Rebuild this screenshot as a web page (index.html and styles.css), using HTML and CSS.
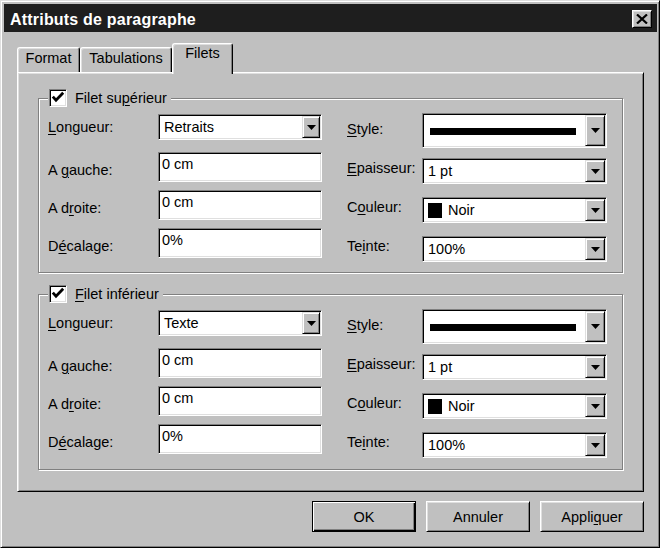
FILE: index.html
```html
<!DOCTYPE html>
<html lang="fr">
<head>
<meta charset="utf-8">
<title>Attributs de paragraphe</title>
<link rel="stylesheet" href="styles.css">
</head>
<body>
<div class="window">
  <div class="titlebar">
    <span class="title">Attributs de paragraphe</span>
    <span class="close"><svg width="12" height="10" viewBox="0 0 12 10"><path d="M1 0.5 L11 9.5 M11 0.5 L1 9.5" stroke="#000" stroke-width="2.2" fill="none"/></svg></span>
  </div>

  <div class="tabs">
    <div class="tab tab-format">Format</div>
    <div class="tab tab-tabul">Tabulations</div>
    <div class="tab tab-filets active">Filets</div>
  </div>

  <div class="panel">
    <div class="group">
      <div class="legend">
        <span class="check"><svg width="14" height="14" viewBox="0 0 14 14"><path d="M1.8 5.6 L5 9.2 L12.2 1.8" stroke="#000" stroke-width="2.8" fill="none"/></svg></span>
        <span>Filet su<u>p</u>érieur</span>
      </div>
      <div class="cols">
        <div class="col col-left">
          <div class="row row-l1"><span class="lbl"><u>L</u>ongueur:</span><div class="combo combo-left"><span class="val">Retraits</span><span class="drop"><svg width="9" height="5" viewBox="0 0 9 5"><path d="M0 0H9L4.5 5Z" fill="#000"/></svg></span></div></div>
          <div class="row row-field row-l2"><span class="lbl">A <u>g</u>auche:</span><div class="field">0 cm</div></div>
          <div class="row row-field row-l3"><span class="lbl">A d<u>r</u>oite:</span><div class="field">0 cm</div></div>
          <div class="row row-field row-l3"><span class="lbl">D<u>é</u>calage:</span><div class="field">0%</div></div>
        </div>
        <div class="col col-right">
          <div class="row row-r1"><span class="lbl lbl-style"><u>S</u>tyle:</span><div class="combo combo-right combo-style"><span class="val"><span class="bar"></span></span><span class="drop"><svg width="9" height="5" viewBox="0 0 9 5"><path d="M0 0H9L4.5 5Z" fill="#000"/></svg></span></div></div>
          <div class="row row-r2"><span class="lbl lbl-up"><u>E</u>paisseur:</span><div class="combo combo-right"><span class="val">1 pt</span><span class="drop"><svg width="9" height="5" viewBox="0 0 9 5"><path d="M0 0H9L4.5 5Z" fill="#000"/></svg></span></div></div>
          <div class="row row-r3"><span class="lbl lbl-up">C<u>o</u>uleur:</span><div class="combo combo-right"><span class="val"><span class="swatch"></span>Noir</span><span class="drop"><svg width="9" height="5" viewBox="0 0 9 5"><path d="M0 0H9L4.5 5Z" fill="#000"/></svg></span></div></div>
          <div class="row row-r3"><span class="lbl lbl-up">Te<u>i</u>nte:</span><div class="combo combo-right"><span class="val">100%</span><span class="drop"><svg width="9" height="5" viewBox="0 0 9 5"><path d="M0 0H9L4.5 5Z" fill="#000"/></svg></span></div></div>
        </div>
      </div>
    </div>

    <div class="group group-2">
      <div class="legend">
        <span class="check"><svg width="14" height="14" viewBox="0 0 14 14"><path d="M1.8 5.6 L5 9.2 L12.2 1.8" stroke="#000" stroke-width="2.8" fill="none"/></svg></span>
        <span><u>F</u>ilet inférieur</span>
      </div>
      <div class="cols">
        <div class="col col-left">
          <div class="row row-l1"><span class="lbl"><u>L</u>ongueur:</span><div class="combo combo-left"><span class="val">Texte</span><span class="drop"><svg width="9" height="5" viewBox="0 0 9 5"><path d="M0 0H9L4.5 5Z" fill="#000"/></svg></span></div></div>
          <div class="row row-field row-l2"><span class="lbl">A <u>g</u>auche:</span><div class="field">0 cm</div></div>
          <div class="row row-field row-l3"><span class="lbl">A d<u>r</u>oite:</span><div class="field">0 cm</div></div>
          <div class="row row-field row-l3"><span class="lbl">D<u>é</u>calage:</span><div class="field">0%</div></div>
        </div>
        <div class="col col-right">
          <div class="row row-r1"><span class="lbl lbl-style"><u>S</u>tyle:</span><div class="combo combo-right combo-style"><span class="val"><span class="bar"></span></span><span class="drop"><svg width="9" height="5" viewBox="0 0 9 5"><path d="M0 0H9L4.5 5Z" fill="#000"/></svg></span></div></div>
          <div class="row row-r2"><span class="lbl lbl-up"><u>E</u>paisseur:</span><div class="combo combo-right"><span class="val">1 pt</span><span class="drop"><svg width="9" height="5" viewBox="0 0 9 5"><path d="M0 0H9L4.5 5Z" fill="#000"/></svg></span></div></div>
          <div class="row row-r3"><span class="lbl lbl-up">C<u>o</u>uleur:</span><div class="combo combo-right"><span class="val"><span class="swatch"></span>Noir</span><span class="drop"><svg width="9" height="5" viewBox="0 0 9 5"><path d="M0 0H9L4.5 5Z" fill="#000"/></svg></span></div></div>
          <div class="row row-r3"><span class="lbl lbl-up">Te<u>i</u>nte:</span><div class="combo combo-right"><span class="val">100%</span><span class="drop"><svg width="9" height="5" viewBox="0 0 9 5"><path d="M0 0H9L4.5 5Z" fill="#000"/></svg></span></div></div>
        </div>
      </div>
    </div>
  </div>

  <div class="buttons">
    <div class="btn default">OK</div>
    <div class="btn">Annuler</div>
    <div class="btn">Appli<u>q</u>uer</div>
  </div>
</div>
</body>
</html>
```

FILE: styles.css
```css
* { box-sizing: border-box; }

html, body {
  margin: 0;
  padding: 0;
}

body {
  background: #c0c0c0;
  font-family: "Liberation Sans", Arial, sans-serif;
  font-size: 14.5px;
  color: #000;
}

u { text-underline-offset: 2px; }

.window {
  width: 660px;
  height: 548px;
  background: #c0c0c0;
  border: 1px solid;
  border-color: #dfdfdf #000 #000 #dfdfdf;
  box-shadow: inset 1px 1px 0 #fff, inset -1px -1px 0 #808080;
  padding: 3px 2px 2px 3px;
}

/* Title bar */
.titlebar {
  height: 28px;
  background: #1e1e1e;
  display: flex;
  align-items: center;
  justify-content: space-between;
  padding: 0 5px 0 6px;
}

.title {
  color: #fff;
  font-weight: bold;
  font-size: 16px;
  letter-spacing: 0.2px;
  margin-top: 3px;
}

.close {
  width: 20px;
  height: 18px;
  margin-top: 2px;
  background: #c0c0c0;
  border: 1px solid;
  border-color: #fff #000 #000 #fff;
  box-shadow: inset 1px 1px 0 #dfdfdf, inset -1px -1px 0 #808080;
  display: flex;
  align-items: center;
  justify-content: center;
}

/* Tabs */
.tabs {
  display: flex;
  align-items: flex-end;
  height: 29px;
  margin: 11px 0 0 13px;
}

.tab {
  height: 25px;
  background: #c0c0c0;
  border-top: 1px solid #fff;
  border-left: 1px solid #fff;
  border-right: 1px solid #000;
  border-radius: 3px 3px 0 0;
  box-shadow: inset 1px 1px 0 #dfdfdf, inset -1px 0 0 #808080;
  text-align: center;
  line-height: 16px;
  padding-top: 2px;
}

.tab-format { width: 63px; }
.tab-tabul { width: 92px; }
.tab-filets { width: 61px; }

.tab.active {
  height: 31px;
  margin-bottom: -2px;
  padding-top: 1px;
  position: relative;
  z-index: 1;
}

/* Panel */
.panel {
  width: 627px;
  height: 420px;
  margin-left: 13px;
  border: 1px solid;
  border-color: #fff #000 #000 #fff;
  box-shadow: inset 1px 1px 0 #dfdfdf, inset -1px -1px 0 #808080;
  padding: 25px 20px 0 20px;
}

.group {
  height: 175px;
  border: 1px solid #808080;
  box-shadow: inset 1px 1px 0 #fff, 1px 1px 0 #fff;
}

.group-2 {
  margin-top: 21px;
  height: 176px;
}

.legend {
  display: flex;
  align-items: center;
  gap: 8px;
  width: max-content;
  height: 18px;
  margin: -10px 0 0 9px;
  padding: 0 4px 0 1px;
  background: #c0c0c0;
  line-height: 16px;
}

.check {
  width: 18px;
  height: 18px;
  background: #fff;
  border: 1px solid;
  border-color: #808080 #fff #fff #808080;
  box-shadow: inset 1px 1px 0 #000, inset -1px -1px 0 #dfdfdf;
  padding: 1px;
  display: flex;
}

.cols {
  display: flex;
  gap: 25px;
  padding-left: 9px;
}

.col {
  display: flex;
  flex-direction: column;
}

.col-left { width: 274px; }
.col-right { width: 260px; }

.row {
  display: flex;
  align-items: center;
  line-height: 16px;
}

.col-left .lbl { width: 110px; }
.col-right .lbl { width: 75px; }

.row-field { align-items: flex-start; }
.row-field .lbl { margin-top: 10px; }

.lbl-up { padding-bottom: 6px; }
.lbl-style { padding-bottom: 3px; }

.row-l1 { margin-top: 7px; }
.row-l2 { margin-top: 12px; }
.row-l3 { margin-top: 8px; }

.row-r1 { margin-top: 6px; }
.row-r2 { margin-top: 10px; }
.row-r3 { margin-top: 13px; }

/* Inputs */
.combo,
.field {
  background: #fff;
  border: 1px solid;
  border-color: #808080 #fff #fff #808080;
  box-shadow: inset 1px 1px 0 #000, inset -1px -1px 0 #dfdfdf;
  padding: 1px;
}

.combo {
  display: flex;
  height: 26px;
}

.combo-left { width: 164px; }
.combo-right { width: 185px; }
.combo-style { height: 35px; }

.field {
  width: 164px;
  height: 30px;
  padding: 3px 2px 0 3px;
}

.val {
  flex: 1;
  display: flex;
  align-items: center;
  padding-left: 4px;
}

.combo-style .val { padding-left: 6px; }

.bar {
  width: 146px;
  height: 7px;
  background: #000;
  margin-top: 1px;
}

.swatch {
  width: 14px;
  height: 15px;
  background: #000;
  margin-right: 6px;
}

.drop {
  width: 20px;
  background: #c0c0c0;
  border: 1px solid;
  border-color: #dfdfdf #000 #000 #dfdfdf;
  box-shadow: inset 1px 1px 0 #fff, inset -1px -1px 0 #808080;
  display: flex;
  align-items: center;
  justify-content: center;
}

.combo-left .drop { width: 18px; }

/* Buttons */
.buttons {
  display: flex;
  justify-content: flex-end;
  gap: 10px;
  width: 640px;
  margin-top: 9px;
}

.btn {
  width: 104px;
  height: 31px;
  display: flex;
  align-items: center;
  justify-content: center;
  background: #c0c0c0;
  border: 1px solid;
  border-color: #fff #000 #000 #fff;
  box-shadow: inset 1px 1px 0 #dfdfdf, inset -1px -1px 0 #808080;
}

.btn.default {
  border-color: #000;
  box-shadow: inset 1px 1px 0 #fff, inset -1px -1px 0 #000, inset -2px -2px 0 #808080;
}
```
